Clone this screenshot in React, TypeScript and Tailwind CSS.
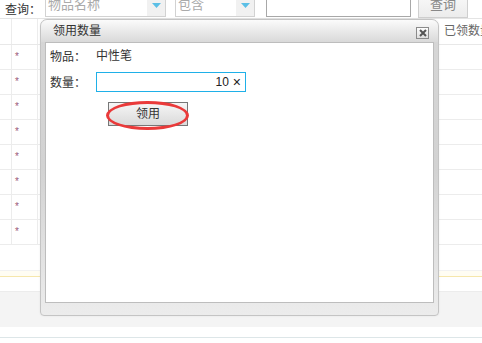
const rows = [0, 1, 2, 3, 4, 5, 6, 7];

const cjk = { fontFamily: '"Noto Sans CJK SC", sans-serif' };

function Arrow() {
  return (
    <svg width="9" height="5" viewBox="0 0 9 5">
      <path d="M0 0 L9 0 L4.5 5 Z" fill="#5bbfe6" />
    </svg>
  );
}

function Select({ text, width }: { text: string; width: number }) {
  return (
    <div
      className="flex h-[24px] border border-[#d2d2d2] bg-white"
      style={{ width }}
    >
      <span className="flex-1 pl-[2px] text-[13px] leading-[22px] text-[#aaa]">{text}</span>
      <span className="flex w-[18px] items-center justify-center bg-[#f1f1f1]">
        <Arrow />
      </span>
    </div>
  );
}

export default function App() {
  return (
    <div
      className="relative h-[343px] w-[482px] overflow-hidden bg-white text-[12px] text-[#333]"
      style={{ fontFamily: '"Liberation Sans", "Noto Sans CJK SC", sans-serif' }}
    >
      {/* toolbar */}
      <div className="flex h-[19px] items-end overflow-hidden border-b border-[#e4e4e4]">
        <span className="ml-[5px] w-[40px] text-[12px] leading-[18px] text-[#333]" style={cjk}>
          查询：
        </span>
        <div className="mb-[1px] flex items-end">
          <Select text="物品名称" width={121} />
          <div className="w-[9px]" />
          <Select text="包含" width={80} />
          <div className="ml-[11px] h-[24px] w-[145px] border border-[#a8a8a8] bg-white" />
        </div>
        <div className="ml-[7px] flex h-[26px] w-[50px] items-center justify-center border border-[#cfcfcf] bg-gradient-to-b from-[#fafafa] to-[#ececec] text-[13px] text-[#888]">
          查询
        </div>
      </div>

      {/* table */}
      <div className="flex h-[26px] border-b border-[#e8e8e8]">
        <div className="w-[12px] shrink-0 border-r border-[#ececec]" />
        <div className="w-[26px] shrink-0 border-r border-[#ececec]" />
        <div className="min-w-0 flex-1 overflow-hidden whitespace-nowrap pl-[406px] text-[12px] leading-[24px] text-[#666]">
          已领数量
        </div>
      </div>
      {rows.map((r) => (
        <div key={r} className="flex h-[25px] border-b border-[#ececec]">
          <div className="w-[12px] shrink-0 border-r border-[#ececec]" />
          <div className="flex w-[26px] shrink-0 items-center justify-start border-r border-[#ececec] pl-[3px]">
            <span className="text-[10px] leading-[10px] text-[#9a5a78]">*</span>
          </div>
          <div className="flex-1" />
        </div>
      ))}

      {/* footer bands */}
      <div className="mt-[25px] h-[6px] border-t border-[#f2f2f2] bg-[#fffdf3]" />
      <div className="h-[1px] bg-[#f6e7ac]" />
      <div className="mt-[14px] h-[36px] border-t border-[#ececec] bg-[#f4f4f4]" />
      <div className="mt-[10px] h-[1px] bg-[#dde6e8]" />

      {/* dialog */}
      <div className="absolute left-[40px] top-[19px] flex h-[297px] w-[399px] flex-col rounded-t-[7px] rounded-b-[4px] border border-[#c4c4c4] bg-gradient-to-b from-[#d6d6d6] via-[#d2d2d2] to-[#ececec] px-[4px] pb-[12px] shadow-[0_0_2px_rgba(0,0,0,0.08)]">
        <div className="-mx-[4px] flex h-[22px] items-center rounded-t-[6px] bg-gradient-to-b from-[#fbfbfb] to-[#d9d9d9] pl-[12px] pr-[9px]">
          <span className="flex-1 text-[12px] text-[#333]">领用数量</span>
          <span className="mt-[4px] flex h-[12px] w-[13px] items-center justify-center border border-[#8a8a8a] bg-gradient-to-b from-[#fdfdfd] to-[#dedede]">
            <svg width="8" height="8" viewBox="0 0 8 8">
              <path d="M1 1 L7 7 M7 1 L1 7" stroke="#555" strokeWidth="2" />
            </svg>
          </span>
        </div>
        <div className="flex-1 border border-[#bdbdbd] bg-white pl-[4px] pt-[3px]">
          <div className="flex h-[20px] items-center">
            <span className="w-[46px]" style={cjk}>物品：</span>
            <span>中性笔</span>
          </div>
          <div className="mt-[6px] flex items-center">
            <span className="w-[46px]" style={cjk}>数量：</span>
            <div className="flex h-[20px] w-[150px] items-center justify-end border border-[#1fb0e8] pr-[4px] text-[12px] text-[#222]">
              <span>10</span>
              <span className="ml-[4px] text-[14px] leading-none">×</span>
            </div>
          </div>
          <div className="relative ml-[58px] mt-[10px] h-[24px] w-[80px]">
            <div className="flex h-full w-full items-center justify-center border border-[#777] bg-gradient-to-b from-[#f6f6f6] to-[#dadada] text-[12px] text-[#333]">
              领用
            </div>
            <div className="absolute -left-[2px] -top-[1px] h-[29px] w-[83px] rounded-[50%] border-[3px] border-[#ea3a3a]" />
          </div>
        </div>
      </div>
    </div>
  );
}
